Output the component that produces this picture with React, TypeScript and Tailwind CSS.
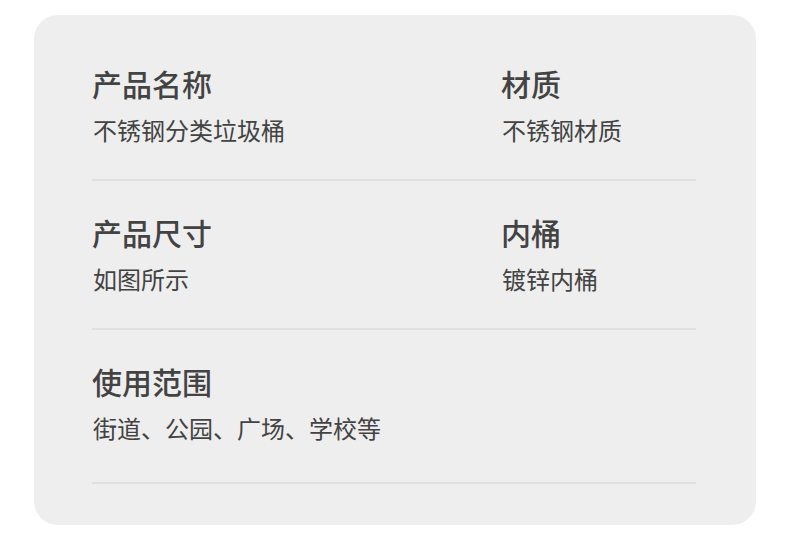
import React from "react";

// 商品参数卡片：两列参数 + 单列参数，每行底部一条分隔线
const rows: { cells: { label: string; value: string }[]; last?: boolean }[] = [
  {
    cells: [
      { label: "产品名称", value: "不锈钢分类垃圾桶" },
      { label: "材质", value: "不锈钢材质" },
    ],
  },
  {
    cells: [
      { label: "产品尺寸", value: "如图所示" },
      { label: "内桶", value: "镀锌内桶" },
    ],
  },
  {
    cells: [{ label: "使用范围", value: "街道、公园、广场、学校等" }],
    last: true,
  },
];

export default function App() {
  return (
    <div
      className="min-h-[553px] bg-white pt-[15px]"
      style={{ fontFamily: '"Noto Sans CJK SC", "Noto Sans", sans-serif' }}
    >
      <div className="mx-[34px] rounded-[24px] bg-[#eeeeee] pl-[58px] pr-[60px] pt-[17px] pb-[41px]">
        {rows.map((row, i) => (
          <div
            key={i}
            className={`grid grid-cols-[409px_1fr] border-b-2 border-[#e0e0e0] pt-[34px] ${
              row.last ? "pb-[39px]" : "pb-[34px]"
            }`}
          >
            {row.cells.map((c) => (
              <div key={c.label} className="flex flex-col">
                <p className="text-[30px] leading-[34px] font-medium text-[#434343]">{c.label}</p>
                <p className="mt-[15px] pl-[1px] text-[24px] leading-[30px] text-[#434343]">{c.value}</p>
              </div>
            ))}
          </div>
        ))}
      </div>
    </div>
  );
}
